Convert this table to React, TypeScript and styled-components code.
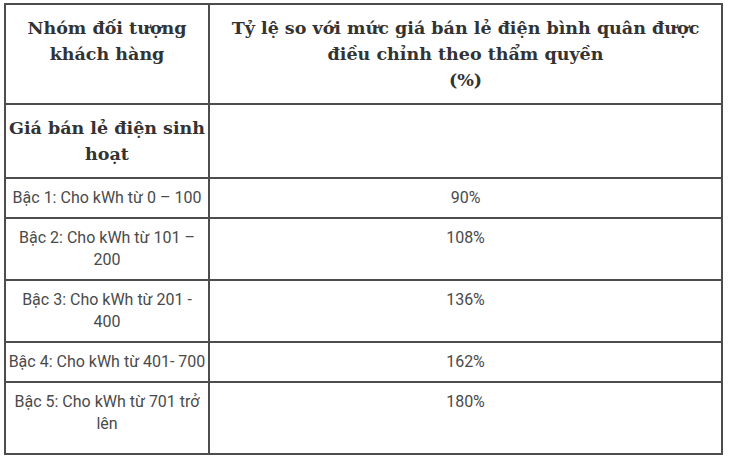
import React from 'react';
import styled, { createGlobalStyle } from 'styled-components';

const GlobalStyle = createGlobalStyle`
  html, body {
    margin: 0;
    padding: 0;
    background: #ffffff;
  }
`;

const rows = [
  { label: 'Bậc 1: Cho kWh từ 0 – 100', value: '90%', height: 38 },
  { label: 'Bậc 2: Cho kWh từ 101 – 200', value: '108%', height: 61 },
  { label: 'Bậc 3: Cho kWh từ 201 - 400', value: '136%', height: 61 },
  { label: 'Bậc 4: Cho kWh từ 401- 700', value: '162%', height: 39 },
  { label: 'Bậc 5: Cho kWh từ 701 trở lên', value: '180%', height: 72 },
];

const Page = styled.div`
  padding: 3px 0 0 4px;
`;

const Table = styled.table`
  width: 719px;
  border-collapse: collapse;
  table-layout: fixed;
  color: #333333;
`;

const Col = styled.col<{ $w?: number }>`
  ${(p) => (p.$w ? `width: ${p.$w}px;` : '')}
`;

const Row = styled.tr<{ $h: number }>`
  height: ${(p) => p.$h}px;
`;

const Cell = styled.td`
  border: 2px solid #4d4d4d;
  padding: 8px 2px;
  vertical-align: top;
  text-align: center;
  font-family: Roboto, 'Noto Sans', sans-serif;
  font-size: 16px;
  line-height: 22px;
  color: #4a4a4a;
`;

const HeadCell = styled(Cell)<{ $tight?: boolean }>`
  padding: 10px ${(p) => (p.$tight ? 1 : 6)}px;
  font-family: 'DejaVu Serif', 'Liberation Serif', serif;
  font-weight: bold;
  font-size: 17.5px;
  line-height: 26px;
  color: #333333;
`;

const App: React.FC = () => {
  return (
    <>
      <GlobalStyle />
      <Page>
        <Table>
          <colgroup>
            <Col $w={204} />
            <Col />
          </colgroup>
          <tbody>
            <Row $h={97}>
              <HeadCell>Nhóm đối tượng khách hàng</HeadCell>
              <HeadCell>
                Tỷ lệ so với mức giá bán lẻ điện bình quân được điều chỉnh theo thẩm quyền
                <br />
                (%)
              </HeadCell>
            </Row>
            <Row $h={72}>
              <HeadCell $tight>Giá bán lẻ điện sinh hoạt</HeadCell>
              <HeadCell />
            </Row>
            {rows.map((r) => (
              <Row key={r.label} $h={r.height}>
                <Cell>{r.label}</Cell>
                <Cell>{r.value}</Cell>
              </Row>
            ))}
          </tbody>
        </Table>
      </Page>
    </>
  );
};

export default App;
